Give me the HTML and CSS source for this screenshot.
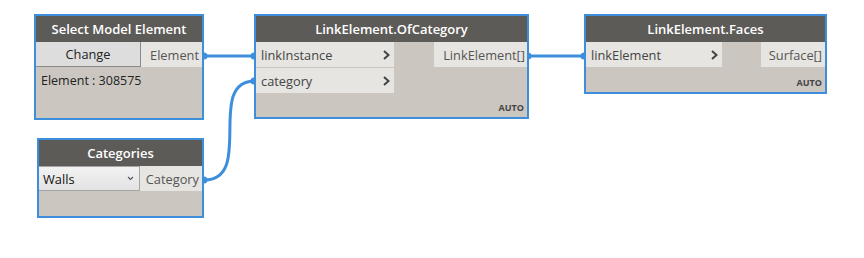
FILE: index.html
```html
<!DOCTYPE html>
<html>
<head>
<meta charset="utf-8">
<link rel="stylesheet" href="styles.css">
</head>
<body>
<div class="canvas">
  <svg class="wires" width="864" height="258" viewBox="0 0 864 258">
    <g fill="none" stroke="#3d8fdb" stroke-width="3">
      <path d="M204 56 L254 56"/>
      <path d="M528 56 L584 56"/>
      <path d="M204 180 C255 180 205 81 255 81"/>
    </g>
    <g fill="#3d8fdb">
      <circle cx="204" cy="56" r="3.5"/>
      <circle cx="254" cy="56" r="3.5"/>
      <circle cx="254" cy="81" r="3.5"/>
      <circle cx="528" cy="56" r="3.5"/>
      <circle cx="584" cy="56" r="3.5"/>
      <circle cx="204" cy="180" r="3.5"/>
    </g>
  </svg>

  <div class="node n-select">
    <div class="hdr">Select Model Element</div>
    <div class="row">
      <div class="btn">Change</div>
      <div class="out">Element</div>
    </div>
    <div class="info">Element : 308575</div>
  </div>

  <div class="node n-ofcat">
    <div class="hdr">LinkElement.OfCategory</div>
    <div class="ports">
      <div class="ins in-ofcat">
        <div class="in"><span>linkInstance</span><svg class="chev" width="7" height="10" viewBox="0 0 7 10"><path d="M1 1 L5.5 5 L1 9" fill="none" stroke="#444" stroke-width="2"/></svg></div>
        <div class="in"><span>category</span><svg class="chev" width="7" height="10" viewBox="0 0 7 10"><path d="M1 1 L5.5 5 L1 9" fill="none" stroke="#444" stroke-width="2"/></svg></div>
      </div>
      <div class="outs">
        <div class="out o-link">LinkElement[]</div>
      </div>
    </div>
    <div class="auto">AUTO</div>
  </div>

  <div class="node n-faces">
    <div class="hdr">LinkElement.Faces</div>
    <div class="ports">
      <div class="ins in-faces">
        <div class="in"><span>linkElement</span><svg class="chev" width="7" height="10" viewBox="0 0 7 10"><path d="M1 1 L5.5 5 L1 9" fill="none" stroke="#444" stroke-width="2"/></svg></div>
      </div>
      <div class="outs">
        <div class="out o-surf">Surface[]</div>
      </div>
    </div>
    <div class="auto">AUTO</div>
  </div>

  <div class="node n-cats">
    <div class="hdr">Categories</div>
    <div class="row">
      <div class="drop"><span>Walls</span><svg width="7" height="5" viewBox="0 0 7 5"><path d="M1 1 L3.5 3.5 L6 1" fill="none" stroke="#555" stroke-width="1.1"/></svg></div>
      <div class="out">Category</div>
    </div>
  </div>
</div>
</body>
</html>
```

FILE: styles.css
```css
html, body {
  margin: 0;
  padding: 0;
  background: #ffffff;
}
.canvas {
  position: relative;
  width: 864px;
  height: 258px;
  overflow: hidden;
  font-family: "Open Sans", "Noto Sans", sans-serif;
}
.wires {
  position: absolute;
  left: 0;
  top: 0;
}
.node {
  position: absolute;
  box-sizing: border-box;
  border: 2px solid #3d8fdb;
  background: #cbc7c0;
  display: flex;
  flex-direction: column;
}
.n-select { left: 34px; top: 14px; width: 170px; height: 106px; }
.n-ofcat  { left: 254px; top: 14px; width: 275px; height: 105px; }
.n-faces  { left: 584px; top: 14px; width: 243px; height: 80px; }
.n-cats   { left: 37px; top: 138px; width: 167px; height: 80px; }

.hdr {
  height: 26px;
  background: #5d5b58;
  color: #ffffff;
  font-size: 13px;
  font-weight: 600;
  display: flex;
  align-items: center;
  justify-content: center;
  letter-spacing: 0;
}
.row {
  height: 25px;
  display: flex;
}
.btn {
  width: 105px;
  box-sizing: border-box;
  background: #dddddd;
  border-right: 1px solid #8a8a8a;
  border-bottom: 1px solid #8a8a8a;
  display: flex;
  align-items: center;
  justify-content: center;
  font-size: 12.8px;
  color: #222;
}
.out {
  flex: 1;
  background: #e6e5e1;
  color: #555;
  font-size: 12.8px;
  display: flex;
  align-items: center;
  justify-content: flex-end;
  padding-right: 3px;
  height: 25px;
  box-sizing: border-box;
}
.info {
  padding: 5px 0 0 5px;
  font-size: 12.5px;
  color: #222;
}
.ports {
  display: flex;
  justify-content: space-between;
}
.ins {
  display: flex;
  flex-direction: column;
  gap: 1px;
}
.in-ofcat { width: 138px; }
.in-faces { width: 136px; }
.in {
  height: 25px;
  background: #e6e5e1;
  display: flex;
  align-items: center;
  justify-content: space-between;
  padding: 0 4px 0 5px;
  font-size: 12.8px;
  color: #444;
}
.outs {
  display: flex;
  flex-direction: column;
}
.o-link { width: 93px; flex: none; padding-right: 2px; }
.o-surf { width: 64px; flex: none; padding-right: 3px; }
.auto {
  margin-top: auto;
  align-self: flex-end;
  font-size: 9px;
  font-weight: 700;
  color: #444;
  padding: 0 3px 3px 0;
}
.drop {
  width: 101px;
  box-sizing: border-box;
  border: 1px solid #a5a5a5;
  border-left: none;
  background: linear-gradient(#f2f2f2, #e3e3e3);
  display: flex;
  align-items: center;
  justify-content: space-between;
  padding: 0 5px 0 4px;
  font-size: 12.8px;
  color: #111;
}
```
